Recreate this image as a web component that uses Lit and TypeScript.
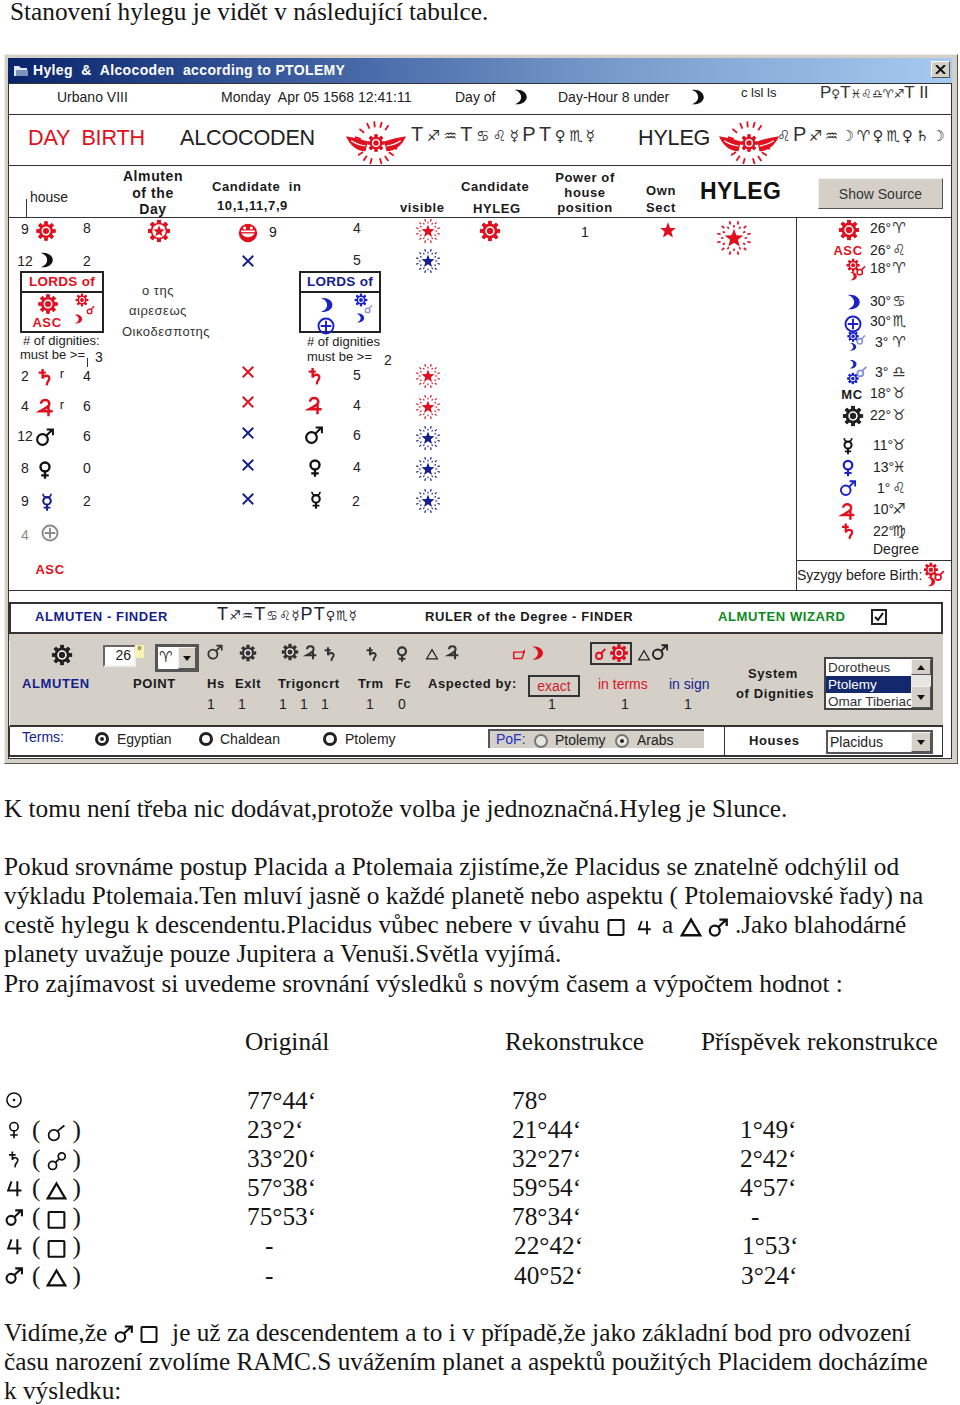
import { LitElement, html, css, svg, TemplateResult } from "lit";
import { customElement } from "lit/decorators.js";

const RED = "#e01020";
const NAVY = "#141e8c";
const BLUE = "#1a22c8";

function gear(c: string, cx = 12, cy = 12, s = 1, dark = "") {
  const teeth = [0, 45, 90, 135, 180, 225, 270, 315].map(
    (a) => svg`<rect x=${cx - 2 * s} y=${cy - 11.5 * s} width=${4 * s} height=${23 * s} fill=${c} transform="rotate(${a} ${cx} ${cy})"/>`
  );
  return svg`${teeth}<circle cx=${cx} cy=${cy} r=${8.5 * s} fill=${c}/><circle cx=${cx} cy=${cy} r=${5.4 * s} fill="#fff"/><circle cx=${cx} cy=${cy} r=${3.6 * s} fill=${dark || c}/>`;
}
function moonPath(c: string, t = "") {
  return svg`<path transform=${t} fill=${c} d="M5 2.5C14 1 21 6 21 12C21 18 14 23 5 21.5C10 20 13.5 16.5 13.5 12C13.5 7.5 10 4 5 2.5Z"/>`;
}
function burst(c: string) {
  const rays: unknown[] = [];
  for (let i = 0; i < 12; i++) {
    const a = ((i + 0.5) / 12) * Math.PI * 2;
    const b = ((i + 1) / 12) * Math.PI * 2;
    rays.push(svg`<line x1=${12 + 9.8 * Math.cos(a)} y1=${12 + 9.8 * Math.sin(a)} x2=${12 + 12.2 * Math.cos(a)} y2=${12 + 12.2 * Math.sin(a)} stroke=${c} stroke-width="1.2"/>`);
    rays.push(svg`<line x1=${12 + 7.4 * Math.cos(b)} y1=${12 + 7.4 * Math.sin(b)} x2=${12 + 9.2 * Math.cos(b)} y2=${12 + 9.2 * Math.sin(b)} stroke=${c} stroke-width="1.1"/>`);
  }
  return svg`${rays}<polygon fill=${c} points="12,5.5 13.7,10 18.5,10.2 14.8,13.2 16,18 12,15.3 8,18 9.2,13.2 5.5,10.2 10.3,10"/>`;
}
function wrap(size: number, body: unknown, vb = "0 0 24 24", h = size): TemplateResult {
  return html`<svg class="ico" width=${size} height=${h} viewBox=${vb}>${body}</svg>`;
}
function conj(c: string) {
  return svg`<circle cx="9" cy="15" r="5" fill="none" stroke=${c} stroke-width="3"/><path d="M12 11L19 4" stroke=${c} stroke-width="3" fill="none"/>`;
}
const wingRays = [-75, -50, -25, -5, 15, 35, 105, 125, 145, 165, 195, 215, 235];
const icons: Record<string, (c: string, s: number) => TemplateResult> = {
  sun: (c, s) => wrap(s, gear(c)),
  moon: (c, s) => wrap(s, moonPath(c)),
  star: (c, s) => wrap(s, svg`<polygon fill=${c} points="12,1 15,9 23,9.3 16.8,14.4 19,22.5 12,18 5,22.5 7.2,14.4 1,9.3 9,9"/>`),
  starsun: (c, s) => wrap(s, svg`${[0, 45, 90, 135, 180, 225, 270, 315].map((a) => svg`<rect x="10" y="0.5" width="4" height="23" fill=${c} transform="rotate(${a} 12 12)"/>`)}<circle cx="12" cy="12" r="8.7" fill=${c}/><circle cx="12" cy="12" r="7" fill="#fff"/><polygon fill=${c} points="12,6 13.6,10.2 18,10.4 14.6,13.2 15.7,17.5 12,15 8.3,17.5 9.4,13.2 6,10.4 10.4,10.2"/>`),
  burst: (c, s) => wrap(s, burst(c)),
  smile: (c, s) => wrap(s, svg`<circle cx="12" cy="12" r="11" fill=${c}/><path d="M3.5 9H20.5C20 15 16 17 12 17C8 17 4 15 3.5 9Z" fill="#fff"/><rect x="1" y="11" width="22" height="1.6" fill=${c}/><circle cx="8" cy="6" r="1.8" fill="#fff"/><circle cx="16" cy="6" r="1.8" fill="#fff"/>`),
  x: (c, s) => wrap(s, svg`<path d="M3 3L21 21M21 3L3 21" stroke=${c} stroke-width="3.2" fill="none"/>`),
  saturn: (c, s) => wrap(s, svg`<path d="M9 2V14C10 9.5 17 9 17.5 13.5C18 17 13 18 14.5 22.5M4 6.5H13" stroke=${c} stroke-width="3" fill="none"/>`),
  jupiter: (c, s) => wrap(s, svg`<path d="M6 8C6 2 16 2 16 8C16 12 10 14 5 17H20M15 10V23" stroke=${c} stroke-width="3" fill="none"/>`),
  mars: (c, s) => wrap(s, svg`<circle cx="9" cy="15" r="6.4" fill="none" stroke=${c} stroke-width="2.6"/><path d="M13.5 10.5L21 3M14 3H21.5V10" stroke=${c} stroke-width="2.4" fill="none"/>`),
  venus: (c, s) => wrap(s, svg`<circle cx="12" cy="8" r="6" fill="none" stroke=${c} stroke-width="3.2"/><path d="M12 14V23.5M7 19H17" stroke=${c} stroke-width="3" fill="none"/>`),
  mercury: (c, s) => wrap(s, svg`<path d="M6.5 1C7 5 9 6 12 6C15 6 17 5 17.5 1" stroke=${c} stroke-width="2.2" fill="none"/><circle cx="12" cy="10.5" r="5" fill="none" stroke=${c} stroke-width="2.8"/><path d="M12 15V23.5M7.5 19.5H16.5" stroke=${c} stroke-width="2.6" fill="none"/>`),
  earth: (c, s) => wrap(s, svg`<circle cx="12" cy="12" r="10" fill="none" stroke=${c} stroke-width="2.6"/><path d="M12 5V19M5 12H19" stroke=${c} stroke-width="2.6" fill="none"/>`),
  trio: (c, s) => wrap(s, svg`${gear(c, 10, 7, 0.58)}<g transform="translate(4.5 13) scale(.45)">${moonPath(c)}</g><g transform="translate(12 6) scale(.55)">${conj(c)}</g>`),
  trioBlue: (c, s) => wrap(s, svg`${gear(c, 10, 6, 0.5)}<g transform="translate(4.5 12) scale(.42)">${moonPath(c)}</g><g transform="translate(12 3) scale(.55)">${conj("#8892d8")}</g>`),
  trio2: (c, s) => wrap(s, svg`<g transform="translate(5 0) scale(.4)">${moonPath(c)}</g>${gear(c, 10, 18, 0.45)}<g transform="translate(12 5) scale(.55)">${conj("#8892d8")}</g>`),
  conj: (c, s) => wrap(s, conj(c)),
  tri: (c, s) => wrap(s, svg`<path d="M12 4L22 21H2Z" fill="none" stroke=${c} stroke-width="2.2"/>`),
  sq: (c, s) => wrap(s, svg`<path d="M3 7H19L21 5V7L17 18H3Z" fill="none" stroke=${c} stroke-width="2.4"/>`),
  winged: (c, s) => wrap(s, svg`
    ${wingRays.map((a) => svg`<rect x="39" y="1" width="2.4" height="8" fill=${c} transform="rotate(${a} 40 30)"/>`)}
    <path d="M0 21C9 23 19 24 29 28L26 41C15 41 5 33 0 21Z" fill=${c}/><path d="M80 21C71 23 61 24 51 28L54 41C65 41 75 33 80 21Z" fill=${c}/>
    <path d="M7 27C13 31 19 33 26 34" stroke="#fff" stroke-width="1.4" fill="none"/><path d="M73 27C67 31 61 33 54 34" stroke="#fff" stroke-width="1.4" fill="none"/>
    <g transform="translate(28 18)">${gear(c)}</g>`, "0 0 80 60", (s * 60) / 80),
};
const ic = (n: string, c: string, s: number) => icons[n](c, s);

/** Document glyphs: thin black strokes */
const doc: Record<string, (s: number) => TemplateResult> = {
  sun: (s) => wrap(s, svg`<circle cx="12" cy="12" r="8.5" fill="none" stroke="#111" stroke-width="1.9"/><circle cx="12" cy="12" r="1.6" fill="#111"/>`),
  venus: (s) => wrap(s, svg`<circle cx="12" cy="8" r="5" fill="none" stroke="#111" stroke-width="2"/><path d="M12 13V22M7.5 18H16.5" stroke="#111" stroke-width="2" fill="none"/>`),
  saturn: (s) => wrap(s, svg`<path d="M10 3V13C11 9 17 10 16.5 14C16 17 12 18 13.5 22M6 7H14" stroke="#111" stroke-width="2" fill="none"/>`),
  jup: (s) => wrap(s, svg`<path d="M9 4L5 15H21M16 4V22" stroke="#111" stroke-width="2.4" fill="none"/>`),
  mars: (s) => wrap(s, svg`<circle cx="8.5" cy="16" r="5.4" fill="none" stroke="#111" stroke-width="2.5"/><path d="M12.5 12L21 4M13.5 4H21.5V11" stroke="#111" stroke-width="2.5" fill="none"/>`),
  conj: (s) => wrap(s, svg`<circle cx="9" cy="15" r="6" fill="none" stroke="#111" stroke-width="2"/><path d="M13 10.5L21 4" stroke="#111" stroke-width="2" fill="none"/>`),
  opp: (s) => wrap(s, svg`<circle cx="7.5" cy="16.5" r="4.6" fill="none" stroke="#111" stroke-width="2"/><circle cx="18" cy="6" r="4" fill="none" stroke="#111" stroke-width="2"/><path d="M11 13L15 9" stroke="#111" stroke-width="2" fill="none"/>`),
  tri: (s) => wrap(s, svg`<path d="M12 4L22 21H2Z" fill="none" stroke="#111" stroke-width="2.6"/>`),
  sq: (s) => wrap(s, svg`<rect x="3" y="3.5" width="18" height="18" rx="1" fill="none" stroke="#111" stroke-width="2.4"/>`),
};

type It = [number, number, unknown, string?];

/** Places controls of the legacy form at their canvas coordinates, origin (ox, oy) */
function place(ox: number, oy: number, items: It[]) {
  return items.map(([x, y, c, cl]) => {
    const left = (cl || "").includes("lft");
    return html`<div class="at ${cl || ""} ${left ? "" : "ctr"}" style="left:${x - ox}px;top:${y - oy}px">${c}</div>`;
  });
}

const r = (cx: number, cy: number, n: string, c: string, s: number): It => [cx, cy, ic(n, c, s)];

const rightRows: [number, string, string, number][] = [
  [228, "26°", "♈", 870], [250, "26°", "♌", 870], [268, "18°", "♈", 870], [301, "30°", "♋", 870],
  [321, "30°", "♏", 870], [342, "3°", "♈", 875], [372, "3°", "♎", 875], [393, "18°", "♉", 870],
  [415, "22°", "♉", 870], [445, "11°", "♉", 873], [467, "13°", "♓", 873], [488, "1°", "♌", 877],
  [509, "10°", "♐", 873], [531, "22°", "♍", 873],
];

const tableRows: [string, string, string, string, string, number, number, number][] = [
  ["sun", "", "77°44‘", "78°", "", 247, 512, 740],
  ["venus", "conj", "23°2‘", "21°44‘", "1°49‘", 247, 512, 740],
  ["saturn", "opp", "33°20‘", "32°27‘", "2°42‘", 247, 512, 740],
  ["jup", "tri", "57°38‘", "59°54‘", "4°57‘", 247, 512, 740],
  ["mars", "sq", "75°53‘", "78°34‘", "-", 247, 512, 751],
  ["jup", "sq", "-", "22°42‘", "1°53‘", 265, 514, 742],
  ["mars", "tri", "-", "40°52‘", "3°24‘", 265, 514, 741],
];

@customElement("app-root")
export class AppRoot extends LitElement {
  static styles = css`
    :host { display: block; width: 960px; height: 1405px; overflow: hidden; background: #fff; color: #151515;
      font-family: "Liberation Serif", "Times New Roman", serif; font-size: 25.3px; line-height: 29.1px; }
    .ico { display: inline-block; vertical-align: middle; overflow: visible; }
    .first { padding: 0 0 0 10px; margin: 0; line-height: 22px; height: 24px; }
    .win { box-sizing: border-box; width: 954px; height: 710px; margin: 30px 0 0 4px; background: #d4d0c8; padding: 3px 5px 6px 3px;
      border: 1px solid; border-color: #eeebe4 #55534e #55534e #eeebe4; font-family: "Liberation Sans", Arial, sans-serif; font-size: 14px; line-height: 16px; color: #222; }
    .inner { border: 1px solid #333; border-top: none; background: #fff; height: 701px; box-sizing: border-box; display: flex; flex-direction: column; }
    .title { height: 26px; margin: 0 -1px; flex: none; position: relative; background: linear-gradient(90deg, #0a246a 0%, #3a5c9e 30%, #7a9ccc 65%, #a6caf0 100%); color: #fff; font-weight: bold; font-size: 14px; letter-spacing: .35px; border-bottom: 1px solid #333; box-sizing: border-box; }
    .close { position: absolute; right: 2px; top: 3px; width: 19px; height: 17px; background: #d4d0c8; border: 1px solid; border-color: #fff #555 #555 #fff; box-sizing: border-box; display: flex; align-items: center; justify-content: center; }
    .cv { position: relative; flex: none; }
    .sep { border-bottom: 1px solid #333; }
    .at { position: absolute; white-space: pre; }
    .ctr { transform: translate(-50%, -50%); line-height: 0; }
    .ctr.t { line-height: 16px; }
    .lft { transform: translateY(-50%); }
    .b { font-weight: bold; letter-spacing: 0.6px; color: #1a1a1a; }
    .s13 { font-size: 13px; }
    .red { color: #e01020; }
    .navy { color: #141e8c; }
    .green { color: #0a8a20; }
    .gray { color: #8c8c8c; }
    .h2 { font-size: 21.6px; letter-spacing: -0.2px; }
    .hy { font-size: 23px; font-weight: bold; color: #111; letter-spacing: .4px; }
    .gl { font-family: "DejaVu Sans", sans-serif; font-size: 15px; letter-spacing: 3.4px; color: #333; }
    .gl b { font-family: "Liberation Sans", sans-serif; font-weight: normal; font-size: 20px; }
    .gl.g2 { letter-spacing: 2.5px; }
    .gl.g3 { font-size: 13px; letter-spacing: 1px; color: #223; }
    .gl.g3 b { font-size: 18px; }
    .gl.g4 { font-size: 12px; letter-spacing: 0; }
    .gl.g4 b { font-size: 17px; }
    .gl.g1 { letter-spacing: 0; }
    .grk { font-size: 13px; letter-spacing: 0.5px; color: #333; }
    .box { position: absolute; border: 2px solid #222; box-sizing: border-box; background: #fff; }
    .boxHead { border-bottom: 2px solid #222; height: 18px; display: flex; align-items: center; justify-content: center; font-weight: bold; font-size: 13.5px; letter-spacing: .3px; }
    .vline { position: absolute; background: #333; width: 1px; }
    .hline { position: absolute; background: #333; height: 1px; }
    .btn { position: absolute; left: 809px; top: 12px; width: 125px; height: 31px; box-sizing: border-box; background: #d4d0c8; border: 1px solid; border-color: #f4f2ee #555 #555 #f4f2ee; display: flex; align-items: center; justify-content: center; font-size: 14px; color: #333; }
    .bar { margin: 11px 8px 0 0; height: 32px; border: 2px solid #333; box-sizing: border-box; flex: none; position: relative; }
    .gap { height: 7px; margin-right: 8px; background: #d4d0c8; flex: none; }
    .panel { height: 86px; margin-right: 8px; background: #d4d0c8; flex: none; position: relative; border-bottom: 2px solid #333; box-sizing: border-box; border-left: 1px solid #eee; }
    .bottom { height: 30px; margin-right: 8px; flex: none; position: relative; border-bottom: 2px solid #333; box-sizing: border-box; border-left: 1px solid #333; border-right: 1px solid #333; }
    .input { position: absolute; box-sizing: border-box; background: #fff; border: 2px solid; border-color: #666 #eee #eee #666; }
    .ddbtn { position: absolute; background: #d4d0c8; border: 1px solid; border-color: #f4f2ee #555 #555 #f4f2ee; box-sizing: border-box; display: flex; align-items: center; justify-content: center; }
    .ddbtn::after { content: ""; border: 4px solid transparent; border-top: 5px solid #111; border-bottom: 0; }
    .ddbtn.up::after { border-top: 0; border-bottom: 5px solid #111; }
    .list { position: absolute; left: 814px; top: 16px; width: 109px; height: 53px; background: #fff; border: 2px solid #444; box-sizing: border-box; overflow: hidden; font-size: 13.5px; }
    .li { height: 17px; line-height: 17px; padding-left: 2px; width: 87px; color: #333; box-sizing: border-box; white-space: nowrap; overflow: hidden; }
    .li.sel { background: #14286e; color: #fff; }
    .scroll { position: absolute; right: 0; top: 0; bottom: 0; width: 20px; background: #e8e6e0; }
    .radio { position: absolute; width: 14px; height: 14px; border: 3px solid #222; border-radius: 50%; box-sizing: border-box; transform: translate(-50%, -50%); background: #fff; }
    .radio.on::after { content: ""; position: absolute; left: 2px; top: 2px; width: 4px; height: 4px; border-radius: 50%; background: #222; }
    .radio.lg { border-width: 2px; border-color: #777; background: #e8e6e0; }
    .radio.lg.on::after { left: 3px; top: 3px; }
    .pof { position: absolute; left: 478px; top: 2px; width: 216px; height: 19px; background: #d4d0c8; border-top: 2px solid #555; border-left: 2px solid #555; box-sizing: border-box; }
    .chk { position: absolute; left: 860px; top: 5px; width: 16px; height: 16px; border: 2px solid #222; box-sizing: border-box; display: flex; align-items: center; justify-content: center; background: #fff; }
    .frame { position: absolute; left: 580px; top: 1px; width: 42px; height: 23px; border: 2px solid #333; box-sizing: border-box; }
    .exact { position: absolute; left: 518px; top: 34px; width: 52px; height: 22px; border: 2px solid #333; box-sizing: border-box; display: flex; align-items: center; justify-content: center; font-size: 14px; color: #d02030; }
    .docs { margin: 30px 0 0 4px; width: 950px; }
    .docs p { margin: 0; white-space: nowrap; }
    .gapline { height: 29.1px; }
    .gapline.short { height: 28.1px; }
    .ttl { display: grid; grid-template-columns: 241px 260px 196px auto; }
    .tbl { margin-top: 30.1px; }
    .row { display: flex; height: 29.1px; align-items: center; }
    .row > div { white-space: nowrap; }
    .cell1 { display: flex; align-items: center; width: 0; flex: none; position: relative; }
    .paren { margin: 0 6px 0 8px; }
    .inl { position: relative; top: -1px; }
    .inner2 { margin: 0 5px 0 0; }
    .sp { display: inline-block; width: 9px; }
    .sp.s5 { width: 5px; }
  `;

  render() {
    const infoItems: It[] = [
      [57, 97, "Urbano VIII", "lft"],
      [221, 97, "Monday  Apr 05 1568 12:41:11", "lft"],
      [455, 97, "Day of", "lft"],
      r(520, 97, "moon", "#111", 18),
      [558, 97, "Day-Hour 8 under", "lft"],
      r(697, 97, "moon", "#111", 18),
      [741, 93, "c lsl ls", "lft s13"],
      [820, 93, html`<b>P</b>♀<b>T</b>♓♌♎♈♐<b>T</b><b> II</b>`, "lft gl g4"],
    ];
    const headItems: It[] = [
      [28, 138, "DAY  BIRTH", "lft h2 red"],
      [180, 138, "ALCOCODEN", "lft h2"],
      r(376, 143, "winged", RED, 60),
      [411, 135, html`<b>T</b>♐♒<b>T</b>♋♌☿<b>P</b><b>T</b>♀♏☿`, "lft gl"],
      [638, 138, "HYLEG", "lft h2"],
      r(749, 143, "winged", RED, 60),
      [777, 135, html`♌<b>P</b>♐♒☽♈♀♏♀♄☽`, "lft gl g2"],
    ];
    const colItems: It[] = [
      [30, 197, "house", "lft"],
      [153, 176, "Almuten", "ctr t b"], [153, 193, "of the", "ctr t b"], [153, 209, "Day", "ctr t b"],
      [212, 187, "Candidate  in", "lft b s13"], [217, 206, "10,1,11,7,9", "lft b s13"],
      [400, 208, "visible", "lft b s13"],
      [461, 187, "Candidate", "lft b s13"], [473, 209, "HYLEG", "lft b s13"],
      [585, 178, "Power of", "ctr t b s13"], [585, 193, "house", "ctr t b s13"], [585, 208, "position", "ctr t b s13"],
      [661, 191, "Own", "ctr t b s13"], [661, 208, "Sect", "ctr t b s13"],
      [700, 191, "HYLEG", "lft hy"],
    ];
    const num = (x: number, y: number, s: string, cl = ""): It => [x, y, s, "ctr t " + cl];
    const mainItems: It[] = [
      num(25, 229, "9"), r(46, 231, "sun", RED, 20), num(87, 228, "8"),
      r(159, 231, "starsun", RED, 23), r(248, 233, "smile", RED, 20), num(273, 232, "9"), num(357, 228, "4"), r(428, 231, "burst", RED, 24),
      r(490, 231, "sun", RED, 21), num(585, 232, "1"), r(668, 230, "star", RED, 17), r(734, 238, "burst", RED, 34),
      num(25, 261, "12"), r(46, 260, "moon", "#111", 18), num(87, 261, "2"), r(248, 261, "x", NAVY, 14), num(357, 260, "5"), r(428, 261, "burst", NAVY, 24),
      r(48, 304, "sun", RED, 20), [47, 323, "ASC", "ctr t b s13 red"], r(82, 300, "sun", RED, 13), r(78, 319, "moon", RED, 11), r(91, 310, "conj", RED, 11),
      r(326, 305, "moon", BLUE, 17), r(361, 300, "sun", BLUE, 13), r(360, 318, "moon", BLUE, 11), r(369, 309, "conj", "#8892d8", 11), r(326, 326, "earth", BLUE, 18),
      [23, 341, "# of dignities:", "lft s13"], [20, 355, "must be >=", "lft s13"], num(99, 357, "3"),
      [307, 342, "# of dignities", "lft s13"], [307, 357, "must be >=", "lft s13"], num(388, 360, "2"),
      [142, 291, "ο της", "lft grk"], [129, 311, "αιρεσεως", "lft grk"], [122, 332, "Οικοδεσποτης", "lft grk"],
      num(25, 376, "2"), r(45, 377, "saturn", RED, 19), [62, 374, "r", "ctr t s13"], num(87, 376, "4"), r(248, 372, "x", RED, 14), r(315, 376, "saturn", RED, 19), num(357, 375, "5"), r(428, 376, "burst", RED, 24),
      num(25, 406, "4"), r(46, 407, "jupiter", RED, 20), [62, 405, "r", "ctr t s13"], num(87, 406, "6"), r(248, 402, "x", RED, 14), r(315, 405, "jupiter", RED, 20), num(357, 405, "4"), r(428, 407, "burst", RED, 24),
      num(25, 436, "12"), r(45, 437, "mars", "#111", 20), num(87, 436, "6"), r(248, 433, "x", NAVY, 14), r(314, 435, "mars", "#111", 20), num(357, 435, "6"), r(428, 438, "burst", NAVY, 24),
      num(25, 468, "8"), r(45, 470, "venus", "#111", 18), num(87, 468, "0"), r(248, 465, "x", NAVY, 14), r(315, 468, "venus", "#111", 18), num(357, 467, "4"), r(428, 469, "burst", NAVY, 24),
      num(25, 501, "9"), r(47, 502, "mercury", NAVY, 18), num(87, 501, "2"), r(248, 499, "x", NAVY, 14), r(316, 500, "mercury", "#111", 18), num(356, 501, "2"), r(428, 501, "burst", NAVY, 24),
      num(25, 535, "4", "gray"), r(50, 533, "earth", "#8c8c8c", 18), [50, 570, "ASC", "ctr t b s13 red"],
      r(849, 230, "sun", RED, 21), [848, 251, "ASC", "ctr t b s13 red"], r(855, 270, "trio", RED, 23),
      r(853, 302, "moon", BLUE, 18), r(853, 324, "earth", BLUE, 18), r(855, 342, "trioBlue", BLUE, 23), r(855, 372, "trio2", BLUE, 26),
      [852, 395, "MC", "ctr t b s13"], r(853, 416, "sun", "#222", 21),
      r(848, 446, "mercury", "#111", 17), r(848, 468, "venus", BLUE, 17), r(848, 488, "mars", BLUE, 18), r(848, 511, "jupiter", RED, 19), r(848, 531, "saturn", RED, 18),
      [873, 549, "Degree", "lft"], [797, 575, "Syzygy before Birth:", "lft"], r(933, 575, "trio", RED, 25),
      ...rightRows.flatMap(([y, d, z, x]) => [
        [x, y, d, "lft"] as It,
        [899, y, z, "ctr t gl g1"] as It,
      ]),
    ];
    const barItems: It[] = [
      [35, 617, "ALMUTEN - FINDER", "lft b s13 navy"],
      [217, 615, html`<b>T</b>♐♒<b>T</b>♋♌☿<b>P</b><b>T</b>♀♏☿`, "lft gl g3"],
      [425, 617, "RULER of the Degree - FINDER", "lft b s13"],
      [718, 617, "ALMUTEN WIZARD", "lft b s13 green"],
    ];
    const panelItems: It[] = [
      r(62, 655, "sun", "#222", 21),
      r(215, 652, "mars", "#333", 17), r(248, 653, "sun", "#333", 17), r(290, 652, "sun", "#333", 17), r(311, 652, "jupiter", "#333", 16), r(330, 654, "saturn", "#333", 16),
      r(372, 654, "saturn", "#333", 16), r(402, 654, "venus", "#333", 16), r(432, 654, "tri", "#222", 13), r(453, 652, "jupiter", "#333", 16),
      r(519, 655, "sq", RED, 14), r(537, 653, "moon", RED, 16), r(601, 654, "conj", RED, 15), r(619, 653, "sun", RED, 18), r(644, 655, "tri", "#222", 13), r(660, 652, "mars", "#222", 18),
      [22, 684, "ALMUTEN", "lft b s13 navy"], [133, 684, "POINT", "lft b s13"], [207, 684, "Hs", "lft b s13"], [235, 684, "Exlt", "lft b s13"],
      [278, 684, "Trigoncrt", "lft b s13"], [358, 684, "Trm", "lft b s13"], [395, 684, "Fc", "lft b s13"], [428, 684, "Aspected by:", "lft b s13"],
      [598, 684, "in terms", "lft red"], [669, 684, "in sign", "lft navy"],
      [748, 674, "System", "lft b s13"], [736, 694, "of Dignities", "lft b s13"],
      ...[211, 242, 283, 304, 325, 370].map((x): It => [x, 704, "1", "ctr t"]),
      [402, 704, "0", "ctr t"], [552, 704, "1", "ctr t"], [625, 704, "1", "ctr t"], [688, 704, "1", "ctr t"],
    ];
    const bottomItems: It[] = [
      [22, 737, "Terms:", "lft navy"], [117, 739, "Egyptian", "lft"], [220, 739, "Chaldean", "lft"], [345, 739, "Ptolemy", "lft"],
      [749, 741, "Houses", "lft b s13"],
    ];
    return html`
      <p class="first">Stanovení hylegu je vidět v následující tabulce.</p>
      <div class="win"><div class="inner">
        <div class="title">
          <div class="at lft" style="left:25px;top:12px">Hyleg  &amp;  Alcocoden  according to PTOLEMY</div>
          <svg class="at" style="left:5px;top:6px" width="17" height="14" viewBox="0 0 17 14"><path d="M1 2H6L8 4H14V12H1Z" fill="#dfe6f2"/><path d="M3 6H15V12H3Z" fill="#7f93b8"/></svg>
          <div class="close"><svg width="11" height="9" viewBox="0 0 11 9"><path d="M1 0L10 9M10 0L1 9" stroke="#111" stroke-width="2"/></svg></div>
        </div>
        <div class="cv sep" style="height:30px">${place(9, 84, infoItems)}</div>
        <div class="cv sep" style="height:50px">${place(9, 115, headItems)}</div>
        <div class="cv sep" style="height:51px">
          ${place(9, 166, colItems)}
          <div class="vline" style="left:17px;top:33px;height:18px"></div>
          <div class="btn">Show Source</div>
        </div>
        <div class="cv sep" style="height:372px">
          <div class="box" style="left:11px;top:53px;width:84px;height:62px"><div class="boxHead red">LORDS of</div></div>
          <div class="box" style="left:290px;top:53px;width:82px;height:62px"><div class="boxHead navy">LORDS of</div></div>
          ${place(9, 218, mainItems)}
          <div class="vline" style="left:78px;top:140px;height:9px"></div>
          <div class="vline" style="left:787px;top:0;bottom:0"></div>
          <div class="hline" style="left:787px;right:0;top:342px"></div>
        </div>
        <div class="bar">${place(11, 604, barItems)}
          <div class="chk"><svg width="12" height="12" viewBox="0 0 12 12"><path d="M2 6L5 9L10 2" stroke="#111" stroke-width="2" fill="none"/></svg></div>
        </div>
        <div class="gap"></div>
        <div class="panel">
          ${place(10, 641, panelItems)}
          <div class="input" style="left:93px;top:4px;width:33px;height:22px;text-align:right;padding-right:3px">26</div>
          <div class="at" style="left:125px;top:4px;width:9px;height:13px;background:#fbf3b0;font-size:11px;line-height:10px;text-align:center">°</div>
          <div class="input gl g1" style="left:145px;top:3px;width:44px;height:28px;border-color:#555;border-width:3px;line-height:20px;padding-left:1px">♈<div class="ddbtn" style="right:0;top:0;bottom:0;width:18px"></div></div>
          <div class="frame"></div>
          <div class="exact">exact</div>
          <div class="list">
            <div class="li">Dorotheus</div><div class="li sel">Ptolemy</div><div class="li">Omar Tiberiac</div>
            <div class="scroll"><div class="ddbtn up" style="left:0;right:0;top:0;height:16px"></div><div class="ddbtn" style="left:0;right:0;bottom:0;height:22px"></div></div>
          </div>
        </div>
        <div class="bottom">
          ${place(10, 727, bottomItems)}
          <div class="radio on" style="left:92px;top:12px"></div>
          <div class="radio" style="left:196px;top:12px"></div>
          <div class="radio" style="left:320px;top:12px"></div>
          <div class="pof">
            <div class="at lft" style="left:6px;top:8px;color:#2030c0">PoF:</div>
            <div class="radio lg" style="left:51px;top:10px"></div>
            <div class="at lft" style="left:65px;top:9px">Ptolemy</div>
            <div class="radio lg on" style="left:132px;top:10px"></div>
            <div class="at lft" style="left:147px;top:9px">Arabs</div>
          </div>
          <div class="vline" style="left:714px;top:0;bottom:0"></div>
          <div class="input" style="left:816px;top:3px;width:107px;height:24px;border-color:#555;line-height:20px;padding-left:2px">Placidus<div class="ddbtn" style="right:0;top:0;bottom:0;width:20px"></div></div>
        </div>
      </div></div>
      <div class="docs">
        <p>K tomu není třeba nic dodávat,protože volba je jednoznačná.Hyleg je Slunce.</p>
        <div class="gapline"></div>
        <p>Pokud srovnáme postup Placida a Ptolemaia zjistíme,že Placidus se znatelně odchýlil od</p>
        <p>výkladu Ptolemaia.Ten mluví jasně o každé planetě nebo aspektu ( Ptolemaiovské řady) na</p>
        <p>cestě hylegu k descendentu.Placidus vůbec nebere v úvahu <span class="inl">${doc.sq(20)}</span><span class="sp"></span><span class="inl">${doc.jup(18)}</span><span class="sp"></span>a <span class="inl">${doc.tri(22)}</span><span class="sp s5"></span><span class="inl">${doc.mars(22)}</span> .Jako blahodárné</p>
        <p>planety uvažuje pouze Jupitera a Venuši.Světla vyjímá.</p>
        <p>Pro zajímavost si uvedeme srovnání výsledků s novým časem a výpočtem hodnot :</p>
        <div class="gapline"></div>
        <div class="ttl"><div></div><div>Originál</div><div>Rekonstrukce</div><div>Příspěvek rekonstrukce</div></div>
        <div class="tbl">
          ${tableRows.map(([a, b, c1, c2, c3, x1, x2, x3]) => html`<div class="row">
            <div class="cell1">${doc[a](20)}${b ? html`<span class="paren">(</span><span class="inner2">${doc[b](21)}</span><span>)</span>` : ""}</div>
            <div style="margin-left:${x1 - 4}px;width:${x2 - x1}px">${c1}</div>
            <div style="width:${x3 - x2}px">${c2}</div>
            <div>${c3}</div>
          </div>`)}
        </div>
        <div class="gapline short"></div>
        <p>Vidíme,že <span class="inl">${doc.mars(21)}</span><span class="sp s5"></span><span class="inl">${doc.sq(20)}</span>&nbsp; je už za descendentem a to i v případě,že jako základní bod pro odvození</p>
        <p>času narození zvolíme RAMC.S uvážením planet a aspektů použitých Placidem docházíme</p>
        <p>k výsledku:</p>
      </div>
    `;
  }
}
